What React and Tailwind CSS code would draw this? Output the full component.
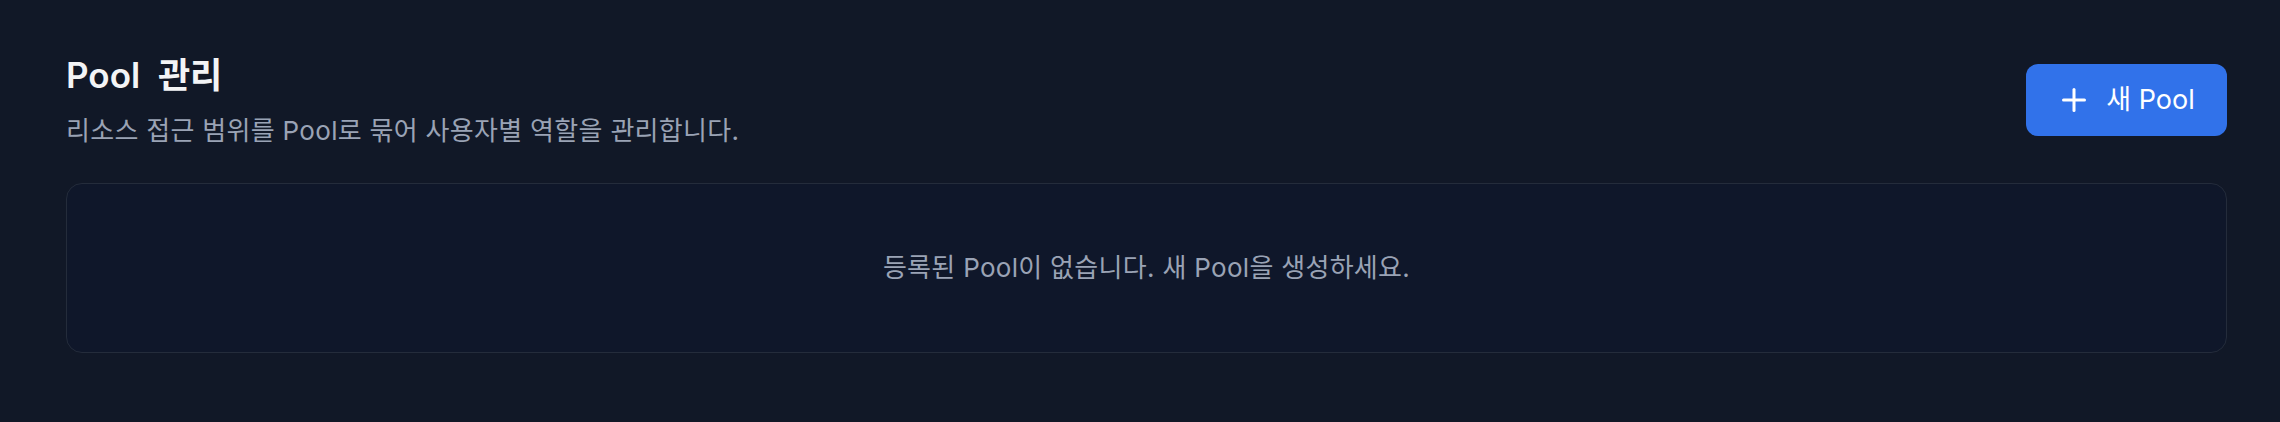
import { Plus } from 'lucide-react';

export default function App() {
  return (
    <div
      className="min-h-screen w-full bg-[#111827] pl-[66px] pr-[53px] pt-[51px]"
      style={{ fontFamily: 'Inter, "Noto Sans CJK KR", sans-serif' }}
    >
      {/* Header */}
      <div className="flex items-center justify-between">
        <div>
          <h1 className="text-[35px] leading-[48px] font-semibold text-[#f3f4f6] [word-spacing:9px]">Pool 관리</h1>
          <p className="mt-[14px] text-[26px] leading-[36px] tracking-[0.3px] text-[#9aa3b5]">
            리소스 접근 범위를 Pool로 묶어 사용자별 역할을 관리합니다.
          </p>
        </div>
        <button className="flex h-[72px] w-[201px] items-center justify-center gap-[14px] rounded-[12px] bg-[#3172ea] pr-[2px] text-[27px] text-white">
          <Plus size={36} strokeWidth={2} />
          <span>새 Pool</span>
        </button>
      </div>

      {/* Empty state */}
      <div className="mt-[34px] flex h-[170px] items-center justify-center rounded-[16px] border border-[#242c3b] bg-[#0f172a]">
        <p className="text-[26px] leading-[36px] tracking-[0.3px] text-[#9aa3b5]">
          등록된 Pool이 없습니다. 새 Pool을 생성하세요.
        </p>
      </div>
    </div>
  );
}
